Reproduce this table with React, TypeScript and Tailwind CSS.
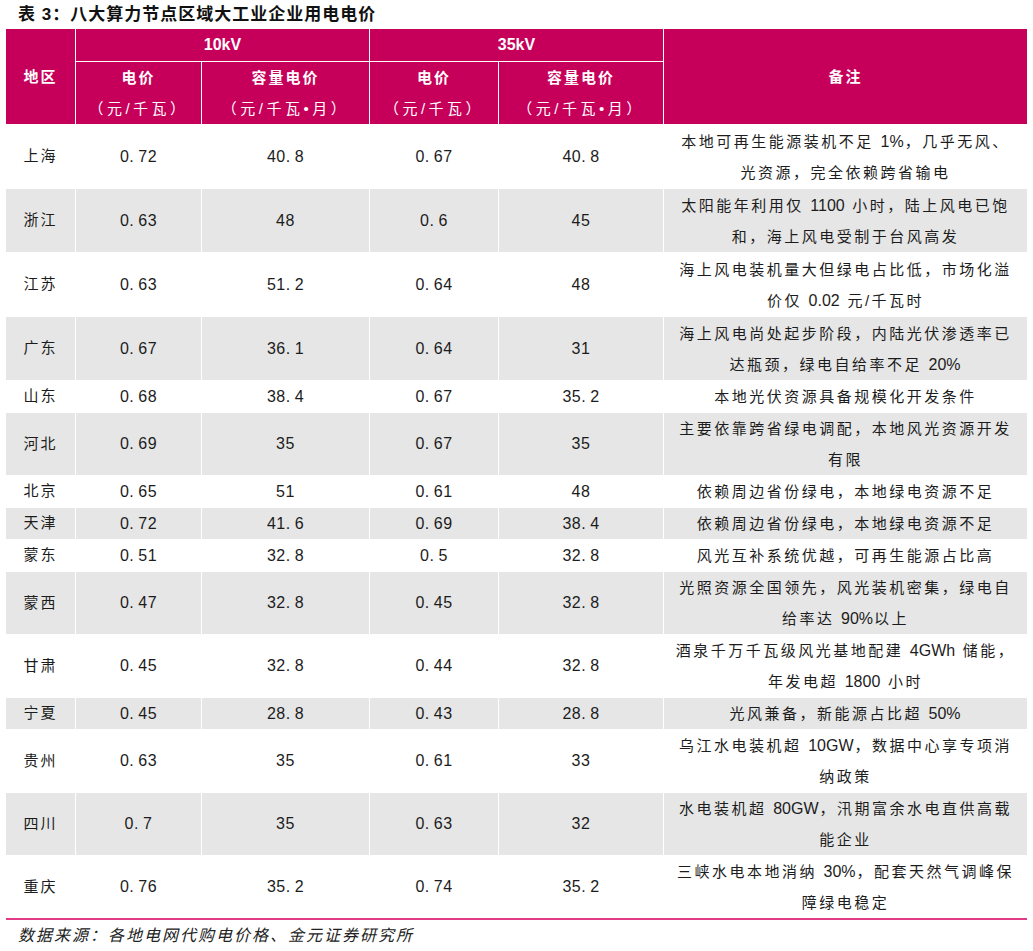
import { Fragment } from 'react';

const PINK = 'bg-[#c6005a]';

interface Row {
  area: string;
  p10: string;
  c10: string;
  p35: string;
  c35: string;
  note: string[];
}

const rows: Row[] = [
  { area: '上海', p10: '0.72', c10: '40.8', p35: '0.67', c35: '40.8', note: ['本地可再生能源装机不足 1%，几乎无风、', '光资源，完全依赖跨省输电'] },
  { area: '浙江', p10: '0.63', c10: '48', p35: '0.6', c35: '45', note: ['太阳能年利用仅 1100 小时，陆上风电已饱', '和，海上风电受制于台风高发'] },
  { area: '江苏', p10: '0.63', c10: '51.2', p35: '0.64', c35: '48', note: ['海上风电装机量大但绿电占比低，市场化溢', '价仅 0.02 元/千瓦时'] },
  { area: '广东', p10: '0.67', c10: '36.1', p35: '0.64', c35: '31', note: ['海上风电尚处起步阶段，内陆光伏渗透率已', '达瓶颈，绿电自给率不足 20%'] },
  { area: '山东', p10: '0.68', c10: '38.4', p35: '0.67', c35: '35.2', note: ['本地光伏资源具备规模化开发条件'] },
  { area: '河北', p10: '0.69', c10: '35', p35: '0.67', c35: '35', note: ['主要依靠跨省绿电调配，本地风光资源开发', '有限'] },
  { area: '北京', p10: '0.65', c10: '51', p35: '0.61', c35: '48', note: ['依赖周边省份绿电，本地绿电资源不足'] },
  { area: '天津', p10: '0.72', c10: '41.6', p35: '0.69', c35: '38.4', note: ['依赖周边省份绿电，本地绿电资源不足'] },
  { area: '蒙东', p10: '0.51', c10: '32.8', p35: '0.5', c35: '32.8', note: ['风光互补系统优越，可再生能源占比高'] },
  { area: '蒙西', p10: '0.47', c10: '32.8', p35: '0.45', c35: '32.8', note: ['光照资源全国领先，风光装机密集，绿电自', '给率达 90%以上'] },
  { area: '甘肃', p10: '0.45', c10: '32.8', p35: '0.44', c35: '32.8', note: ['酒泉千万千瓦级风光基地配建 4GWh 储能，', '年发电超 1800 小时'] },
  { area: '宁夏', p10: '0.45', c10: '28.8', p35: '0.43', c35: '28.8', note: ['光风兼备，新能源占比超 50%'] },
  { area: '贵州', p10: '0.63', c10: '35', p35: '0.61', c35: '33', note: ['乌江水电装机超 10GW，数据中心享专项消', '纳政策'] },
  { area: '四川', p10: '0.7', c10: '35', p35: '0.63', c35: '32', note: ['水电装机超 80GW，汛期富余水电直供高载', '能企业'] },
  { area: '重庆', p10: '0.76', c10: '35.2', p35: '0.74', c35: '35.2', note: ['三峡水电本地消纳 30%，配套天然气调峰保', '障绿电稳定'] },
];

const Num = ({ v }: { v: string }) => {
  const [a, b] = v.split('.');
  return (
    <span className="tracking-[0.5px]">
      {a}
      {b !== undefined && (
        <>
          <span className="mr-[4px]">.</span>
          {b}
        </>
      )}
    </span>
  );
};

// latin runs stay tight, CJK gets the wide spacing
const NoteLine = ({ text }: { text: string }) => {
  const parts = text.split(/([A-Za-z0-9%.]+)/);
  return (
    <span>
      {parts.map((p, k) =>
        /^[A-Za-z0-9%.]+$/.test(p) ? (
          <span key={k} className="tracking-normal text-[16px] mr-[1px]">
            {p}
          </span>
        ) : (
          <Fragment key={k}>{p}</Fragment>
        ),
      )}
    </span>
  );
};

const HeadCell = ({ top, unit, className = '' }: { top: string; unit?: string; className?: string }) => (
  <div className={`${PINK} flex flex-col items-center justify-center text-white leading-[31px] ${className}`}>
    <span className="font-bold text-[15px] tracking-[2px]">{top}</span>
    {unit && <span className="text-[15px] tracking-[3.5px]">{unit}</span>}
  </div>
);

export default function App() {
  return (
    <div
      className="w-[1033px] h-[951px] bg-white text-[#1c1c1c] overflow-hidden"
      style={{ fontFamily: '"Liberation Sans", "Noto Sans CJK SC", sans-serif' }}
    >
      {/* Title */}
      <div className="h-[29px] pl-[18px] flex items-center text-[17px] font-bold tracking-[1px] text-[#111]">
        表 3：八大算力节点区域大工业企业用电电价
      </div>

      <div className="mx-[6px] w-[1021px]">
        {/* Header */}
        <div className="grid grid-cols-[69px_125px_167px_128px_164px_363px] grid-rows-[32px_62px] gap-px bg-white">
          <HeadCell top="地区" className="row-span-2" />
          <div className={`${PINK} col-span-2 flex items-center justify-center text-white font-bold text-[16px]`}>10kV</div>
          <div className={`${PINK} col-span-2 flex items-center justify-center text-white font-bold text-[16px]`}>35kV</div>
          <HeadCell top="备注" className="row-span-2" />
          <HeadCell top="电价" unit="（元/千瓦）" />
          <HeadCell top="容量电价" unit="（元/千瓦•月）" />
          <HeadCell top="电价" unit="（元/千瓦）" />
          <HeadCell top="容量电价" unit="（元/千瓦•月）" />
        </div>

        {/* Body */}
        <div className="mt-px flex flex-col gap-px border-b-2 border-[#e33a88]">
          {rows.map((r, i) => {
            const bg = i % 2 === 1 ? 'bg-[#e6e6e6]' : 'bg-white';
            const h = r.note.length === 1 ? 'h-[31px]' : i < 4 ? 'h-[63px]' : 'h-[62px]';
            const cell = `${bg} ${h} flex items-center justify-center`;
            return (
              <div key={r.area} className="grid grid-cols-[69px_125px_167px_128px_164px_363px] gap-x-px">
                <div className={`${cell} text-[15px] tracking-[2px]`}>{r.area}</div>
                <div className={`${cell} text-[16px]`}><Num v={r.p10} /></div>
                <div className={`${cell} text-[16px]`}><Num v={r.c10} /></div>
                <div className={`${cell} text-[16px]`}><Num v={r.p35} /></div>
                <div className={`${cell} text-[16px]`}><Num v={r.c35} /></div>
                <div className={`${cell} flex-col text-[15px] leading-[31px] tracking-[2.5px] whitespace-nowrap`}>
                  {r.note.map((line, j) => (
                    <NoteLine key={j} text={line} />
                  ))}
                </div>
              </div>
            );
          })}
        </div>
      </div>

      {/* Source */}
      <div className="pl-[18px] pt-[4px] text-[16px] italic tracking-[2px] text-[#222] leading-[24px]">
        数据来源：各地电网代购电价格、金元证券研究所
      </div>
    </div>
  );
}
